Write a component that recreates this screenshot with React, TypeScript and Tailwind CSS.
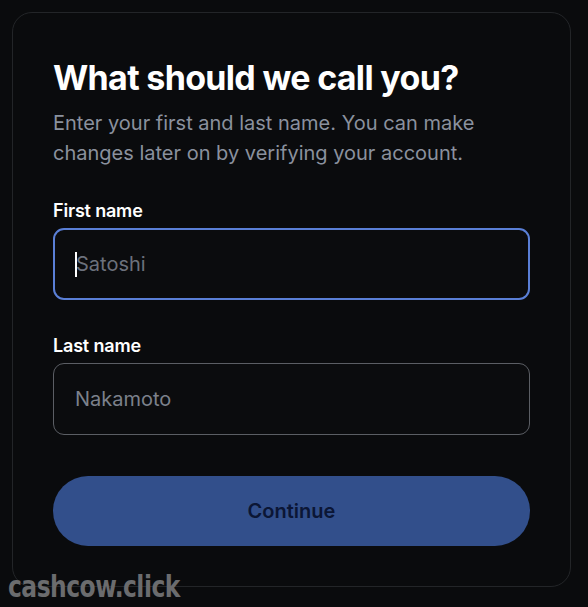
// Name entry step of an onboarding flow

const Field = ({
  label,
  placeholder,
  focused,
}: {
  label: string;
  placeholder: string;
  focused?: boolean;
}) => (
  <div className="flex flex-col">
    <label className="text-[18px] leading-6 font-semibold text-white tracking-[-0.01em]">
      {label}
    </label>
    <div className="relative mt-[5px]">
      <input
        autoFocus={focused}
        placeholder={placeholder}
        className={
          focused
            ? 'h-[72px] w-full rounded-[11px] border-2 border-[#5a7fd6] bg-[#0b0c0e] px-[21px] text-[20px] text-white outline-none placeholder:text-[#6c717c] caret-transparent'
            : 'h-[72px] w-full rounded-[11px] border border-[#5b5e64] bg-[#0b0c0e] px-[21px] text-[20px] text-white outline-none placeholder:text-[#7c818b]'
        }
      />
      {focused && (
        <span className="pointer-events-none absolute left-[22px] top-[24px] h-[25px] w-[2px] bg-white" />
      )}
    </div>
  </div>
);

export default function App() {
  return (
    <div
      className="relative min-h-[607px] w-[588px] bg-[#0a0b0d] pt-[12px] pl-[12px]"
      style={{ fontFamily: 'Inter, "Noto Sans", sans-serif' }}
    >
      <div className="w-[559px] rounded-[20px] border border-[#232528] px-[40px] pt-[45px] pb-[40px]">
        <h1 className="text-[34px] leading-10 font-bold text-white tracking-[-0.02em]">
          What should we call you?
        </h1>
        <p className="mt-[10px] text-[20px] leading-[30px] text-[#8a919e]">
          Enter your first and last name. You can make changes later on by verifying your account.
        </p>

        <div className="mt-[31px]">
          <Field label="First name" placeholder="Satoshi" focused />
        </div>
        <div className="mt-[34px]">
          <Field label="Last name" placeholder="Nakamoto" />
        </div>

        <button className="mt-[41px] h-[70px] w-full rounded-full bg-[#324f8b] text-[20px] font-semibold text-[#0b1635]">
          Continue
        </button>
      </div>

      <div
        className="absolute left-[8px] top-[568px] origin-left scale-x-[0.84] text-[31px] font-bold leading-9 text-[#6b6c6e] tracking-[-0.02em]"
        style={{ fontFamily: '"DejaVu Sans Condensed", "Liberation Sans Narrow", sans-serif' }}
      >
        cashcow.click
      </div>
    </div>
  );
}
